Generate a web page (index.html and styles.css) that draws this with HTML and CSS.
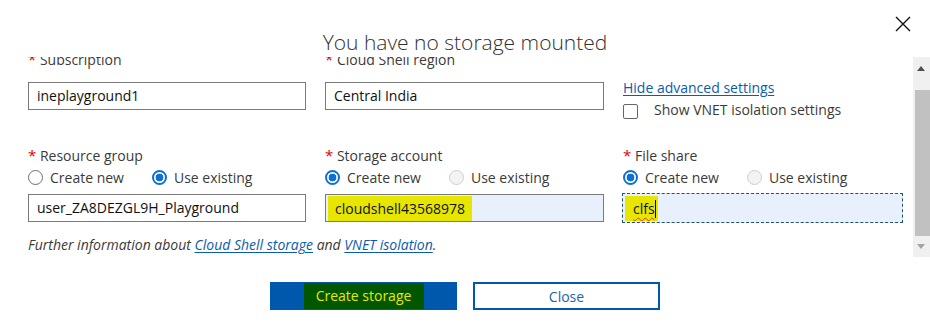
FILE: index.html
```html
<!DOCTYPE html>
<html>
<head>
<meta charset="utf-8">
<link rel="stylesheet" href="styles.css">
</head>
<body>
<div class="dialog">
  <header class="head">
    <h1 class="title">You have no storage mounted</h1>
    <button class="close-x" aria-label="Close">
      <svg width="16" height="16" viewBox="0 0 16 16"><path d="M1 1L15 15M15 1L1 15" stroke="#111" stroke-width="1.4" fill="none"/></svg>
    </button>
  </header>
  <div class="scroll">
    <div class="content">
      <div class="row row1">
        <div class="field">
          <div class="label"><span class="req">*</span> Subscription</div>
          <div class="input">ineplayground1</div>
        </div>
        <div class="field">
          <div class="label"><span class="req">*</span> Cloud Shell region</div>
          <div class="input">Central India</div>
        </div>
        <div class="field adv">
          <a class="link hide-link">Hide advanced settings</a>
          <label class="check"><span class="box"></span><span>Show VNET isolation settings</span></label>
        </div>
      </div>
      <div class="row row2">
        <div class="field">
          <div class="label"><span class="req">*</span> Resource group</div>
          <div class="radios">
            <span class="radio"><span class="dot"></span>Create new</span>
            <span class="radio"><span class="dot on"></span>Use existing</span>
          </div>
          <div class="input">user_ZA8DEZGL9H_Playground</div>
        </div>
        <div class="field">
          <div class="label"><span class="req">*</span> Storage account</div>
          <div class="radios">
            <span class="radio"><span class="dot on"></span>Create new</span>
            <span class="radio"><span class="dot off"></span>Use existing</span>
          </div>
          <div class="input auto"><span class="hl">cloudshell43568978</span></div>
        </div>
        <div class="field">
          <div class="label"><span class="req">*</span> File share</div>
          <div class="radios">
            <span class="radio"><span class="dot on"></span>Create new</span>
            <span class="radio"><span class="dot off"></span>Use existing</span>
          </div>
          <div class="input auto focus"><span class="hl small"><span class="spell">clfs</span><span class="caret"></span></span></div>
        </div>
      </div>
      <p class="info">Further information about <a class="link">Cloud Shell storage</a> and <a class="link">VNET isolation</a>.</p>
    </div>
    <div class="scrollbar">
      <div class="arrow up"></div>
      <div class="thumb"></div>
      <div class="arrow down"></div>
    </div>
  </div>
  <footer class="foot">
    <button class="btn primary"><span class="btn-hl">Create storage</span></button>
    <button class="btn secondary">Close</button>
  </footer>
</div>
</body>
</html>
```
FILE: styles.css
```css
* { box-sizing: border-box; }
html, body { margin: 0; padding: 0; background: #fff; }
body {
  font-family: "Open Sans", "Noto Sans", sans-serif;
  font-size: 14px;
  color: #3b3a39;
  width: 930px;
  height: 335px;
  overflow: hidden;
}
.dialog { display: flex; flex-direction: column; }
.head {
  height: 57px;
  position: relative;
  display: flex;
  justify-content: center;
}
.title {
  margin: 27px 0 0 0;
  font-weight: 300;
  font-size: 21px;
  line-height: 30px;
  color: #323130;
  position: relative;
  z-index: 2;
}
.close-x {
  position: absolute;
  right: 19px;
  top: 16px;
  border: 0;
  background: transparent;
  padding: 0;
  width: 16px;
  height: 16px;
}
.close-x svg { display: block; }
.scroll {
  height: 200px;
  display: flex;
  overflow: hidden;
}
.content {
  flex: 1;
  padding-left: 28px;
  padding-right: 10px;
  margin-top: -8px;
}
.row {
  display: grid;
  grid-template-columns: 278px 279px 280px;
  column-gap: 19px;
}
.row1 .label { height: 20px; line-height: 20px; margin-bottom: 13px; }
.row2 { margin-top: 26px; }
.label { line-height: 20px; height: 20px; white-space: nowrap; }
.req { color: #e50000; font-size: 15px; }
.input {
  height: 28px;
  border: 1px solid #7a7a7a;
  padding: 0 8px;
  line-height: 26px;
  font-size: 14px;
  color: #111;
  white-space: nowrap;
}
.input.auto { background: #e8f0fe; padding-left: 2px; padding-top: 1px; line-height: 25px; }
.input.focus { border: 1px dashed #1f5566; margin-left: -1px; margin-top: -1px; height: 30px; padding-top: 2px; }
.hl { background: #e6e600; display: inline-block; padding: 0 7px 0 7px; height: 25px; line-height: 25px; }
.hl.small { padding: 0 2px 0 8px; }
.spell { text-decoration: underline wavy #e33; text-decoration-thickness: 1px; text-underline-offset: 3px; }
.caret { display: inline-block; width: 1px; height: 18px; background: #000; vertical-align: -4px; }
.radios {
  display: flex;
  gap: 28px;
  height: 22px;
  align-items: center;
  margin-top: 1px;
  margin-bottom: 6px;
}
.radio { display: inline-flex; align-items: center; gap: 7px; }
.dot {
  width: 15px; height: 15px;
  border-radius: 50%;
  border: 1px solid #6e6e6e;
  background: #fff;
  display: inline-block;
}
.dot.on { border: 2px solid #0f6fd6; background: radial-gradient(circle, #0f6fd6 0 3.6px, #fff 4.2px); }
.dot.off { border-color: #cfcfcf; background: #f3f3f3; }
.adv { padding-top: 29px; }
.link { color: #0b5cad; text-decoration: underline; text-underline-offset: 2px; }
.hide-link { display: block; line-height: 20px; height: 20px; }
.check { display: flex; align-items: center; height: 20px; gap: 16px; margin-top: 1px; }
.box {
  width: 15px; height: 15px;
  border: 1px solid #666;
  border-radius: 2px;
  margin-top: 4px;
  display: inline-block;
}
.info {
  margin: 12px 0 0 0;
  font-style: italic;
  line-height: 20px;
}
.scrollbar {
  width: 17px;
  background: #f0f0f0;
  display: flex;
  flex-direction: column;
  align-items: center;
}
.arrow { height: 33px; width: 17px; position: relative; }
.arrow.up::after {
  content: ""; position: absolute; left: 4px; top: 9px;
  border-left: 4.5px solid transparent; border-right: 4.5px solid transparent;
  border-bottom: 5px solid #505050;
}
.arrow.down { height: 21px; }
.arrow.down::after {
  content: ""; position: absolute; left: 4px; top: 8px;
  border-left: 4.5px solid transparent; border-right: 4.5px solid transparent;
  border-top: 5px solid #a3a3a3;
}
.thumb { width: 15px; margin-left: 2px; flex: 1; background: #c1c1c1; }
.foot {
  display: flex;
  justify-content: center;
  gap: 16px;
  margin-top: 25px;
}
.btn {
  font-family: inherit;
  font-size: 14px;
  width: 187px;
  height: 28px;
  padding: 0;
}
.primary {
  background: #0058ad;
  border: 0;
  display: flex;
  align-items: center;
  justify-content: center;
}
.btn-hl {
  background: #005700;
  color: #e8e800;
  height: 26px;
  line-height: 26px;
  width: 120px;
  display: inline-block;
}
.secondary {
  background: #fff;
  border: 2px solid #0058ad;
  color: #1565b8;
}
```
